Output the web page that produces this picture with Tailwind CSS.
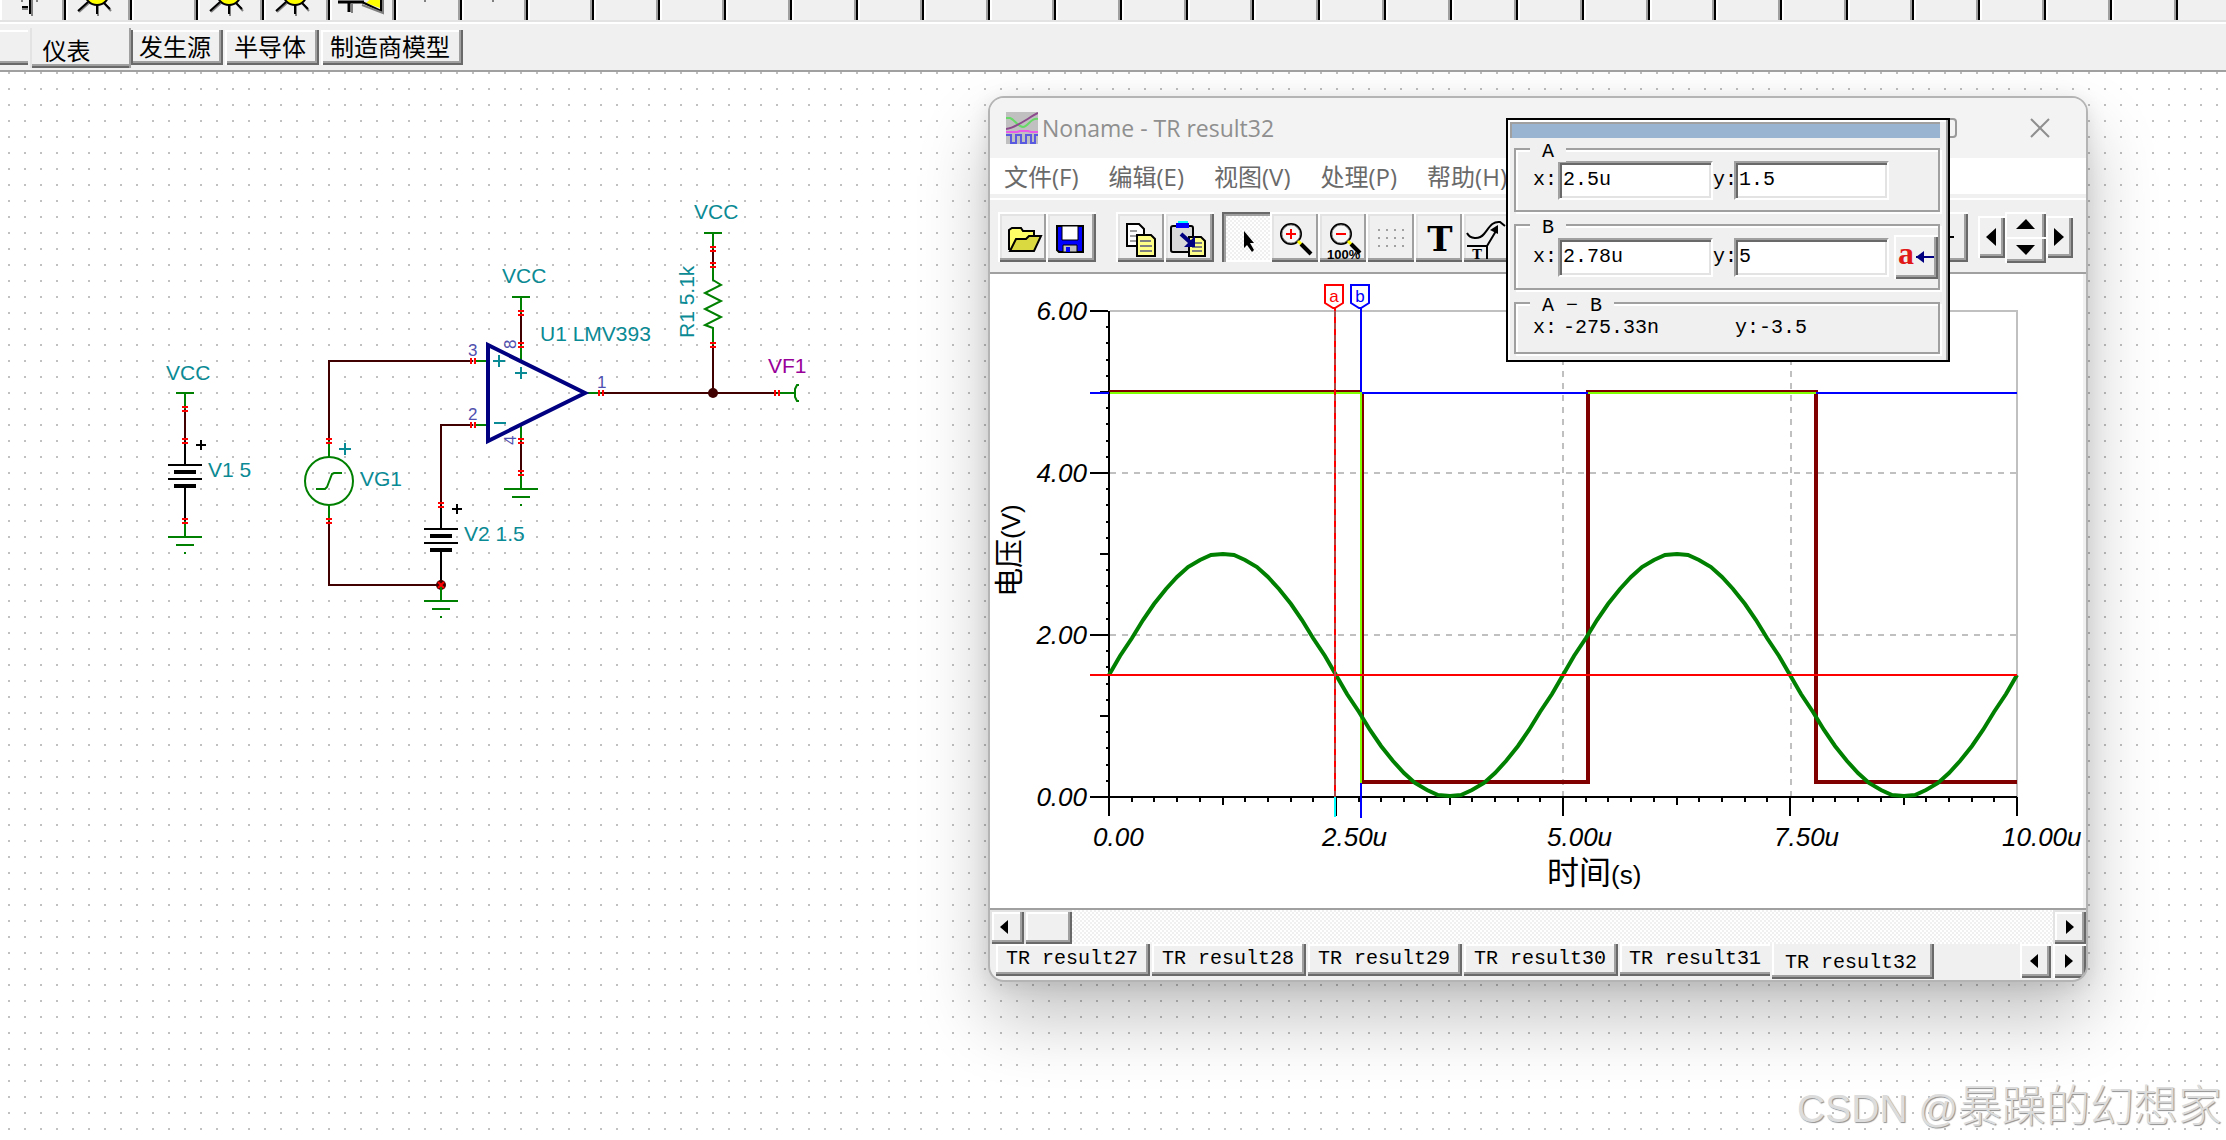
<!DOCTYPE html>
<html lang="zh-CN">

<head>
    <meta charset="UTF-8">
    <meta name="viewport" content="width=device-width, initial-scale=1.0">
    <title>TINA - Noname</title>
    <script src="https://cdn.jsdelivr.net/npm/@tailwindcss/browser@4"></script>
</head>

<body class="h-screen overflow-hidden flex flex-col bg-white text-black font-['Liberation_Sans','Noto_Sans_CJK_SC',sans-serif]">

    <!-- component toolbar -->
    <header class="shrink-0 bg-[#f0f0f0]">
        <div id="parts" class="flex h-5 overflow-hidden">
            <button aria-label="Gate" class="part w-[66px] h-5 shrink-0 shadow-[inset_2px_0_#fff,inset_-2px_0_#000,inset_-4px_0_#a0a0a0]">
                <svg width="66" height="20"><path d="M32 0v16M22 9h6M22 0v2M37 0v2" fill="none" stroke="#808080" stroke-width="2" /><path d="M30 0v14M22 7h6" stroke="#000" stroke-width="2" /></svg>
            </button>
            <button aria-label="Lamp" class="part w-[66px] h-5 shrink-0 shadow-[inset_2px_0_#fff,inset_-2px_0_#000,inset_-4px_0_#a0a0a0]">
                <svg width="66" height="20"><path d="M23 3 13 12M39 4l6 7M32 5v11" stroke="#808080" stroke-width="2" /><path d="M22 2 12 11M38 3l6 6M31 5v9" stroke="#000" stroke-width="2" /><circle cx="31" cy="-7" r="12" fill="#ff0" stroke="#000" stroke-width="2" /></svg>
            </button>
            <button aria-label="Blank" class="part w-[66px] h-5 shrink-0 shadow-[inset_2px_0_#fff,inset_-2px_0_#000,inset_-4px_0_#a0a0a0]"></button>
            <button aria-label="Lamp 2" class="part w-[66px] h-5 shrink-0 shadow-[inset_2px_0_#fff,inset_-2px_0_#000,inset_-4px_0_#a0a0a0]">
                <svg width="66" height="20"><path d="M23 3 13 12M39 4l6 7M32 5v11" stroke="#808080" stroke-width="2" /><path d="M22 2 12 11M38 3l6 6M31 5v9" stroke="#000" stroke-width="2" /><circle cx="31" cy="-7" r="12" fill="#ff0" stroke="#000" stroke-width="2" /></svg>
            </button>
            <button aria-label="Lamp 3" class="part w-[66px] h-5 shrink-0 shadow-[inset_2px_0_#fff,inset_-2px_0_#000,inset_-4px_0_#a0a0a0]">
                <svg width="66" height="20"><path d="M23 3 13 12M39 4l6 7M32 5v11" stroke="#808080" stroke-width="2" /><path d="M22 2 12 11M38 3l6 6M31 5v9" stroke="#000" stroke-width="2" /><circle cx="31" cy="-7" r="12" fill="#ff0" stroke="#000" stroke-width="2" /></svg>
            </button>
            <button aria-label="Buzzer" class="part w-[66px] h-5 shrink-0 shadow-[inset_2px_0_#fff,inset_-2px_0_#000,inset_-4px_0_#a0a0a0]">
                <svg width="66" height="20"><path d="M36 3 50 8V-2H42z" fill="#ff0" /><path d="M8 2h26M19 2v10" stroke="#000" stroke-width="3" /><path d="M32 2 51 11V-2" fill="none" stroke="#000" stroke-width="2" /><path d="M32 5l21 8V0M22 4v9" fill="none" stroke="#808080" stroke-width="2" /></svg>
            </button>
            <button aria-label="Part" class="part w-[66px] h-5 shrink-0 shadow-[inset_2px_0_#fff,inset_-2px_0_#000,inset_-4px_0_#a0a0a0]">
                <svg width="66" height="20"><path d="M29 0v2" stroke="#808080" stroke-width="2" /></svg>
            </button>
            <button aria-label="Part" class="part w-[66px] h-5 shrink-0 shadow-[inset_2px_0_#fff,inset_-2px_0_#000,inset_-4px_0_#a0a0a0]">
                <svg width="66" height="20"><path d="M31 0v2" stroke="#808080" stroke-width="2" /></svg>
            </button>
        </div>
        <div class="h-1 border-t-2 border-[#e3e3e3] bg-white"></div>
        <nav class="flex items-start gap-[2px] h-12 pt-1 border-b-2 border-[#a0a0a0] text-2xl leading-none">
            <button aria-label="开关" class="w-7 h-[35px] mt-[2px] shadow-[inset_0_2px_#fff,inset_0_-2px_#696969,inset_0_-4px_#a0a0a0]"></button>
            <button class="w-[101px] h-10 pr-7 pt-2 shadow-[inset_2px_0_#e3e3e3,inset_-2px_0_#a0a0a0,inset_0_-2px_#696969,inset_0_-4px_#a0a0a0]">仪表</button>
            <button class="w-[92px] h-[35px] mt-[2px] -ml-[2px] pr-1 shadow-[inset_2px_0_#696969,inset_-2px_0_#696969,inset_0_-2px_#696969,inset_-4px_-4px_#a0a0a0,inset_0_2px_#fff]">发生源</button>
            <button class="w-[94px] h-[35px] mt-[2px] pr-1 shadow-[inset_2px_0_#fff,inset_-2px_0_#696969,inset_0_-2px_#696969,inset_-4px_-4px_#a0a0a0,inset_0_2px_#fff]">半导体</button>
            <button class="w-[142px] h-[35px] mt-[2px] pr-1 shadow-[inset_2px_0_#fff,inset_-2px_0_#696969,inset_0_-2px_#696969,inset_-4px_-4px_#a0a0a0,inset_0_2px_#fff]">制造商模型</button>
        </nav>
    </header>

    <main class="relative grow overflow-hidden">

        <!-- schematic sheet, drawn in window coordinates -->
        <svg class="absolute inset-0 w-full h-full" font-family="Liberation Sans" font-size="21" fill="none" stroke-width="2">
            <defs>
                <pattern id="dots" width="16" height="16" patternUnits="userSpaceOnUse">
                    <rect x="8" y="8" width="2" height="2" fill="#c0c0c0" />
                </pattern>
                <g id="gnd">
                    <path d="M0 0v16M-17 16h34M-9 24h18M-1 32h2" stroke="#008000" />
                </g>
                <g id="vcc">
                    <path d="M0 0v16M-9 0h18" stroke="#008000" />
                </g>
                <path id="pinv" d="M-3-2h6M-3 2h6" stroke="#f00" />
                <path id="pinh" d="M-2-3v6M2-3v6" stroke="#f00" />
                <g id="bat" stroke="#000">
                    <path d="M0-24V0M0 21v36M-17 0h34M-17 14h34M11-20h10M16-25v10" />
                    <path d="M-11 7h22M-11 21h22" stroke-width="4" />
                </g>
            </defs>
            <g transform="translate(0 -72)">
                <rect y="72" width="100%" height="100%" fill="url(#dots)" />

                <!-- wires -->
                <g stroke="#400000">
                    <path d="M185 409v32M329 441v-80h144M329 521v64h112M441 505v-80h32M521 313v32M521 441v32M601 393h176M713 249v16M713 345v48" />
                </g>

                <use href="#vcc" x="185" y="393" />
                <use href="#bat" x="185" y="465" />
                <use href="#gnd" x="185" y="521" />

                <circle cx="329" cy="481" r="24" stroke="#008000" />
                <path d="M329 441v16M329 505v16M316 489h9l2-2 5-13 2-1h8" stroke="#008000" />

                <use href="#bat" x="441" y="529" />
                <circle cx="441" cy="585" r="5" fill="#400000" />
                <use href="#gnd" x="441" y="585" />
                <path d="M438 582l6 6M444 582l-6 6" stroke="#f00" />

                <!-- LMV393 -->
                <path d="M475 361h12M475 425h12M521 345v16M521 426v15M585 393h16" stroke="#008000" />
                <path d="M488 345v96l97-48z" stroke="#000080" stroke-width="4" />
                <path d="M493 361h12M499 355v12M515 373h12M521 367v12M494 423h12M339 449h12M345 443v12" stroke="#0a8a94" />
                <use href="#vcc" x="521" y="297" />
                <use href="#gnd" x="521" y="473" />

                <!-- R1 -->
                <use href="#vcc" x="713" y="233" />
                <path d="M713 265v15l8 5-16 8 16 8-16 8 16 8-16 8 8 3v17" stroke="#008000" />
                <circle cx="713" cy="393" r="5" fill="#400000" />
                <path d="M777 393h18M799 385h-2l-2 4v8l2 4h2" stroke="#008000" />

                <use href="#pinv" x="185" y="409" />
                <use href="#pinv" x="185" y="441" />
                <use href="#pinv" x="185" y="521" />
                <use href="#pinv" x="329" y="441" />
                <use href="#pinv" x="329" y="521" />
                <use href="#pinv" x="441" y="505" />
                <use href="#pinv" x="521" y="313" />
                <use href="#pinv" x="521" y="345" />
                <use href="#pinv" x="521" y="441" />
                <use href="#pinv" x="521" y="473" />
                <use href="#pinv" x="713" y="249" />
                <use href="#pinv" x="713" y="265" />
                <use href="#pinv" x="713" y="345" />
                <use href="#pinh" x="473" y="361" />
                <use href="#pinh" x="473" y="425" />
                <use href="#pinh" x="601" y="393" />
                <use href="#pinh" x="777" y="393" />

                <g fill="#0a8a94">
                    <text x="166" y="380">VCC</text>
                    <text x="208" y="477">V1 5</text>
                    <text x="360" y="486">VG1</text>
                    <text x="464" y="541">V2 1.5</text>
                    <text x="502" y="283">VCC</text>
                    <text x="540" y="341">U1 LMV393</text>
                    <text x="694" y="219">VCC</text>
                    <text transform="translate(694 338) rotate(-90)">R1 5.1k</text>
                </g>
                <text x="768" y="373" fill="#990099">VF1</text>
                <g fill="#5050b0" font-size="17">
                    <text x="468" y="356">3</text>
                    <text x="468" y="420">2</text>
                    <text x="597" y="388">1</text>
                    <text transform="translate(516 349) rotate(-90)">8</text>
                    <text transform="translate(516 445) rotate(-90)">4</text>
                </g>
            </g>
        </svg>

        <!-- result window -->
        <section class="absolute left-[988px] top-6 w-[1100px] flex flex-col rounded-2xl border-2 border-[#b4b4b4] bg-[#f0f0f0] overflow-hidden shadow-[0_36px_70px_rgba(0,0,0,0.24),0_4px_20px_rgba(0,0,0,0.1)]">
            <div class="flex items-center h-[60px] pl-4 pr-9 bg-[#f3f3f3] text-[#8f8f8f]">
                <svg width="32" height="32" class="mr-1" fill="none" stroke-width="2">
                    <rect width="32" height="32" fill="#c0c0c0" />
                    <path d="M0 6h4c4 1 8 9 13 9s8-10 15-8" stroke="#66d966" />
                    <path d="M0 17C10 16 22 6 32 1" stroke="#8c4a8c" />
                    <path d="M0 20h11l3-1h8l3 1h7" stroke="#e85ae8" />
                    <path d="M0 23h5v8h5v-8h5v8h5v-8h5v8h4v-8h3" stroke="#5a5ae0" stroke-width="2" />
                </svg>
                <h1 class="text-[23px] font-['Open_Sans'] leading-8">Noname - TR result32</h1>
                <button aria-label="最大化" class="ml-auto mr-[73px]"><svg width="20" height="20" fill="none" stroke="#999" stroke-width="2"><rect x="1" y="1" width="18" height="18" rx="3" /></svg></button>
                <button aria-label="关闭"><svg width="20" height="20" stroke="#8f8f8f" stroke-width="2"><path d="M1 1l18 18M19 1 1 19" /></svg></button>
            </div>
            <nav class="flex gap-[30px] h-9 px-[14px] pt-[2px] items-center bg-white text-[#6a6a6a] text-2xl leading-none font-['Open_Sans','Noto_Sans_CJK_SC',sans-serif]">
                <button>文件(F)</button>
                <button>编辑(E)</button>
                <button>视图(V)</button>
                <button>处理(P)</button>
                <button>帮助(H)</button>
            </nav>
            <div class="mt-1 flex items-start h-[76px] pt-3 pl-2 border-t-2 border-t-white border-b-2 border-b-[#a0a0a0]">
                <button aria-label="打开" class="w-12 h-[50px] shadow-[inset_2px_0_#fff,inset_0_2px_#fff,inset_0_-2px_#696969,inset_-2px_-4px_#a0a0a0,inset_4px_4px_#e3e3e3]">
                    <svg width="48" height="48" stroke="#000" stroke-width="2"><path d="M11 37V17l3-2h9l2 3h11v5h2v4" fill="#ff6" /><path d="M12 38l6-12h10l3-3h12l-7 15z" fill="#dada40" /></svg>
                </button>
                <button aria-label="保存" class="w-[50px] h-[50px] shadow-[inset_2px_0_#fff,inset_0_2px_#fff,inset_0_-2px_#696969,inset_-2px_0_#696969,inset_-4px_-4px_#a0a0a0,inset_4px_4px_#e3e3e3]">
                    <svg width="48" height="48"><path d="M11 13h26v26H13l-2-2z" fill="#00f" stroke="#000" stroke-width="2" /><path d="M16 13h16v14H16z" fill="#fff" stroke="#000" stroke-width="1" /><path d="M17 32h14v7H17z" fill="#c0c0c0" stroke="#000" stroke-width="1" /><path d="M20 34h4v5h-4z" fill="#00f" /></svg>
                </button>
                <button aria-label="复制" class="ml-5 w-12 h-[50px] shadow-[inset_2px_0_#fff,inset_0_2px_#fff,inset_0_-2px_#696969,inset_-2px_-4px_#a0a0a0,inset_4px_4px_#e3e3e3]">
                    <svg width="48" height="48" stroke="#000" stroke-width="2"><path d="M11 11h12l5 5v17H11z" fill="#fff" /><path d="M14 18h7M14 23h6M14 28h6" stroke="#a0a0a0" /><path d="M21 22h14l4 4v17H21z" fill="#ff8" /><path d="M24 28h11M24 33h12M24 38h12" stroke="#808080" /></svg>
                </button>
                <button aria-label="粘贴" class="w-[50px] h-[50px] shadow-[inset_2px_0_#fff,inset_0_2px_#fff,inset_0_-2px_#696969,inset_-2px_0_#696969,inset_-4px_-4px_#a0a0a0,inset_4px_4px_#e3e3e3]">
                    <svg width="48" height="48" stroke="#000" stroke-width="2"><rect x="7" y="13" width="22" height="26" rx="2" fill="#d8d8d8" /><path d="M14 8h10v3H14z" fill="#0ff" stroke="none" /><path d="M12 10h13v5H12z" fill="#00f" stroke="none" /><path d="M25 24h12l4 4v15H25z" fill="#ff8" /><path d="M28 30h10M28 34h10M28 38h10" stroke="#808080" /><path d="M17 21l10 9" stroke="#000080" stroke-width="4" /><path d="M31 23v11H20z" fill="#000080" stroke="none" /></svg>
                </button>
                <div class="ml-2 flex w-[746px]">
                    <button aria-label="选择" class="w-12 h-[50px] bg-[repeating-conic-gradient(#fff_0_25%,#f0f0f0_0_50%)] bg-[length:4px_4px] shadow-[inset_2px_2px_#696969,inset_4px_4px_#a0a0a0,inset_0_-2px_#fff]">
                        <svg width="48" height="48"><path d="M22 18v17l3-3 5 7 2-2-4-7h4z" /></svg>
                    </button>
                    <button aria-label="放大" class="w-12 h-[50px] shadow-[inset_2px_0_#fff,inset_0_2px_#fff,inset_0_-2px_#696969,inset_-2px_-4px_#a0a0a0,inset_4px_4px_#e3e3e3]">
                        <svg width="48" height="48" stroke-width="2"><circle cx="21" cy="21" r="10" fill="#f8f8f8" stroke="#000" /><circle cx="21" cy="21" r="9" fill="none" stroke="#909090" stroke-width="1" /><path d="M16 21h10M21 16v10" stroke="#f00" /><path d="M28 28l4 4" stroke="#ff0" stroke-width="3" /><path d="M31 31l10 10" stroke="#000" stroke-width="4" /></svg>
                    </button>
                    <button aria-label="缩小" class="w-12 h-[50px] shadow-[inset_2px_0_#fff,inset_0_2px_#fff,inset_0_-2px_#696969,inset_-2px_-4px_#a0a0a0,inset_4px_4px_#e3e3e3]">
                        <svg width="48" height="48" stroke-width="2"><circle cx="23" cy="21" r="10" fill="#f8f8f8" stroke="#000" /><circle cx="23" cy="21" r="9" fill="none" stroke="#909090" stroke-width="1" /><path d="M18 21h10" stroke="#f00" /><path d="M30 28l4 4" stroke="#ff0" stroke-width="3" /><path d="M33 31l9 9" stroke="#000" stroke-width="4" /><text x="9" y="46" font-size="13" font-family="Liberation Sans" font-weight="bold">100%</text></svg>
                    </button>
                    <button aria-label="网格" class="w-12 h-[50px] shadow-[inset_2px_0_#fff,inset_0_2px_#fff,inset_0_-2px_#696969,inset_-2px_-4px_#a0a0a0,inset_4px_4px_#e3e3e3]">
                        <svg width="48" height="48" stroke="#a0a0a0" stroke-width="2" stroke-dasharray="2 6"><path d="M12 17h28M12 25h28M12 33h28" /></svg>
                    </button>
                    <button aria-label="文本" class="w-12 h-[50px] shadow-[inset_2px_0_#fff,inset_0_2px_#fff,inset_0_-2px_#696969,inset_-2px_-4px_#a0a0a0,inset_4px_4px_#e3e3e3]">
                        <svg width="48" height="48"><text x="26" y="38" text-anchor="middle" font-family="DejaVu Serif" font-weight="bold" font-size="34">T</text></svg>
                    </button>
                    <button aria-label="标注" class="w-12 h-[50px] shadow-[inset_2px_0_#fff,inset_0_2px_#fff,inset_0_-2px_#696969,inset_-2px_-4px_#a0a0a0,inset_4px_4px_#e3e3e3]">
                        <svg width="48" height="48" fill="none" stroke="#000" stroke-width="2"><path d="M5 20c3 6 12 7 17 1s8-13 16-12l5 4M5 33h20v13M25 33l9-15" /><path d="M36 12v9l-8-4z" fill="#000" stroke="none" /><text x="15" y="46" text-anchor="middle" fill="#000" stroke="none" font-family="DejaVu Serif" font-weight="bold" font-size="13">T</text></svg>
                    </button>
                    <button aria-label="更多" class="grow h-[50px] shadow-[inset_2px_0_#fff,inset_0_2px_#fff,inset_0_-2px_#696969,inset_-2px_0_#696969,inset_-4px_-4px_#a0a0a0]">
                        <svg width="10" height="2" class="ml-auto mr-[14px]"><rect width="10" height="2" /></svg>
                    </button>
                </div>
                <div class="ml-[10px] flex items-center h-[50px]">
                    <button aria-label="左移" class="w-[27px] h-[42px] pl-2 shadow-[inset_2px_2px_#fff,inset_-2px_-2px_#696969,inset_-4px_-4px_#a0a0a0]"><svg width="12" height="20"><path d="M10 1v18L0 10z" /></svg></button>
                    <div class="flex flex-col">
                        <button aria-label="上移" class="w-[41px] h-[25px] pl-[11px] shadow-[inset_2px_2px_#fff,inset_-2px_0_#696969,inset_-4px_0_#a0a0a0]"><svg width="20" height="10"><path d="M0 10h19L10 0z" /></svg></button>
                        <button aria-label="下移" class="w-[41px] h-[26px] pl-[11px] shadow-[inset_2px_2px_#fff,inset_-2px_-2px_#696969,inset_-4px_-4px_#a0a0a0]"><svg width="20" height="10"><path d="M0 0h19L10 10z" /></svg></button>
                    </div>
                    <button aria-label="右移" class="w-[27px] h-[42px] pl-2 shadow-[inset_2px_2px_#fff,inset_-2px_-2px_#696969,inset_-4px_-4px_#a0a0a0]"><svg width="12" height="20"><path d="M0 1v18l10-9z" /></svg></button>
                </div>
            </div>

            <!-- transient chart: 81px per volt, 227px per 2.5us -->
            <svg viewBox="990 274 1096 634" class="block w-full bg-white" fill="none" stroke-width="2" font-family="Liberation Sans, Noto Sans CJK SC" font-size="26">
                <path d="M2085 274v634" stroke="#f0f0f0" stroke-width="4" />
                <path d="M1110 311h907v486" stroke="#c0c0c0" />
                <path d="M1110 473h907M1110 635h907M1335 311v486M1563 311v486M1791 311v486" stroke="#c0c0c0" stroke-dasharray="6 6" />
                <path id="axes" stroke="#000" />
                <path d="M1109 391h253M1363 392v389" stroke="#800000" />
                <path d="M1362 782h226v-390h228v390h201" stroke="#800000" stroke-width="4" />
                <path d="M1090 393h19M1361 393h656M1361 307v86M1361 783v35" stroke="#00f" />
                <path d="M1110 393h251v390M1588 393h228" stroke="#80ff00" />
                <polyline id="sine" stroke="#008000" stroke-width="4" />
                <path d="M1090 675h927" stroke="#f00" />
                <path d="M1335 307v490" stroke="#f00" />
                <path d="M1335 311v486" stroke="#b04848" stroke-dasharray="6 6" />
                <path d="M1335 797v20" stroke="#0ff" />
                <path d="M1325 285h18v18l-8 5h-2l-8-5z" fill="#fff" stroke="#f00" />
                <path d="M1351 285h18v18l-8 5h-2l-8-5z" fill="#fff" stroke="#00f" />
                <g font-size="17" text-anchor="middle">
                    <text x="1334" y="302" fill="#f00">a</text>
                    <text x="1360" y="302" fill="#00f">b</text>
                </g>
                <g fill="#000" font-style="italic">
                    <g text-anchor="end">
                        <text x="1087" y="320">6.00</text>
                        <text x="1087" y="482">4.00</text>
                        <text x="1087" y="644">2.00</text>
                        <text x="1087" y="806">0.00</text>
                    </g>
                    <text x="1093" y="846">0.00</text>
                    <text x="1322" y="846">2.50u</text>
                    <text x="1547" y="846">5.00u</text>
                    <text x="1774" y="846">7.50u</text>
                    <text x="2002" y="846">10.00u</text>
                </g>
                <g fill="#000">
                    <text x="1547" y="884"><tspan font-size="32">时间</tspan>(s)</text>
                    <text transform="translate(1020 597) rotate(-90)"><tspan font-size="29">电压</tspan>(V)</text>
                </g>
            </svg>

            <div class="flex h-9 border-t-2 border-[#a0a0a0] bg-[repeating-conic-gradient(#fff_0_25%,#f0f0f0_0_50%)] bg-[length:4px_4px]">
                <button aria-label="向左滚动" class="w-[34px] pl-[10px] bg-[#f0f0f0] shadow-[inset_2px_2px_#e3e3e3,inset_-2px_-2px_#696969,inset_-4px_-4px_#a0a0a0,inset_4px_4px_#fff]"><svg width="9" height="14"><path d="M8 0v14L0 7z" /></svg></button>
                <div class="w-12 bg-[#f0f0f0] shadow-[inset_2px_2px_#e3e3e3,inset_-2px_-2px_#696969,inset_-4px_-4px_#a0a0a0,inset_4px_4px_#fff]"></div>
                <button aria-label="向右滚动" class="ml-auto w-[33px] pl-[13px] bg-[#f0f0f0] shadow-[inset_2px_2px_#e3e3e3,inset_-2px_-2px_#696969,inset_-4px_-4px_#a0a0a0,inset_4px_4px_#fff]"><svg width="9" height="14"><path d="M0 0v14l8-7z" /></svg></button>
            </div>
            <nav class="flex items-start gap-[2px] h-9 pl-[6px] text-xl leading-none font-['Liberation_Mono',monospace]">
                <button class="w-[154px] h-8 pr-[2px] pb-[2px] shadow-[inset_-2px_0_#696969,inset_0_-2px_#696969,inset_-4px_-4px_#a0a0a0,inset_2px_2px_#fff]">TR result27</button>
                <button class="w-[154px] h-8 pr-[2px] pb-[2px] shadow-[inset_-2px_0_#696969,inset_0_-2px_#696969,inset_-4px_-4px_#a0a0a0,inset_2px_2px_#fff]">TR result28</button>
                <button class="w-[154px] h-8 pr-[2px] pb-[2px] shadow-[inset_-2px_0_#696969,inset_0_-2px_#696969,inset_-4px_-4px_#a0a0a0,inset_2px_2px_#fff]">TR result29</button>
                <button class="w-[154px] h-8 pr-[2px] pb-[2px] shadow-[inset_-2px_0_#696969,inset_0_-2px_#696969,inset_-4px_-4px_#a0a0a0,inset_2px_2px_#fff]">TR result30</button>
                <button class="w-[150px] h-8 pb-[2px] shadow-[inset_0_-2px_#696969,inset_0_-4px_#a0a0a0,inset_2px_2px_#fff]">TR result31</button>
                <button class="w-[162px] h-[35px] pt-[2px] pr-1 shadow-[inset_-2px_0_#696969,inset_0_-2px_#696969,inset_-4px_-4px_#a0a0a0,inset_2px_0_#fff]">TR result32</button>
                <button aria-label="上一页" class="ml-auto w-[31px] h-[34px] pl-[10px] shadow-[inset_2px_2px_#fff,inset_-2px_-2px_#696969,inset_-4px_-4px_#a0a0a0]"><svg width="9" height="14"><path d="M8 0v14L0 7z" /></svg></button>
                <button aria-label="下一页" class="w-[33px] h-[34px] pl-3 shadow-[inset_2px_2px_#fff,inset_-2px_-2px_#696969,inset_-4px_-4px_#a0a0a0]"><svg width="9" height="14"><path d="M0 0v14l8-7z" /></svg></button>
            </nav>
        </section>

        <!-- cursor readout -->
        <section class="absolute left-[1506px] top-[46px] w-[444px] p-[2px] pb-[6px] pl-[6px] pr-2 border-2 border-black bg-[#f0f0f0] shadow-[inset_-2px_0_#a0a0a0,inset_2px_2px_#fff] text-xl leading-none font-['Liberation_Mono',monospace]">
            <div class="-ml-[4px] h-4 border-t-2 border-l-2 border-[#a0a0a0] bg-[#99b4d1]"></div>
            <fieldset class="relative mt-[10px] h-[64px] flex items-center pl-[17px] border-2 border-[#a0a0a0] shadow-[2px_2px_#fff,inset_2px_2px_#fff]">
                <legend class="absolute left-[14px] -top-2 px-3 bg-[#f0f0f0]">A</legend>
                <label for="ax" class="w-[25px]">x:</label>
                <input id="ax" value="2.5u" class="w-[155px] h-[39px] px-[3px] pb-[2px] bg-white border-2 border-t-[#a0a0a0] border-l-[#a0a0a0] border-r-white border-b-white shadow-[inset_2px_2px_#696969,inset_-2px_-2px_#e3e3e3] outline-none">
                <label for="ay" class="w-[21px]">y:</label>
                <input id="ay" value="1.5" class="w-[155px] h-[39px] px-[3px] pb-[2px] bg-white border-2 border-t-[#a0a0a0] border-l-[#a0a0a0] border-r-white border-b-white shadow-[inset_2px_2px_#696969,inset_-2px_-2px_#e3e3e3] outline-none">
            </fieldset>
            <fieldset class="relative mt-3 h-[66px] flex items-center pl-[17px] border-2 border-[#a0a0a0] shadow-[2px_2px_#fff,inset_2px_2px_#fff]">
                <legend class="absolute left-[14px] -top-2 px-3 bg-[#f0f0f0]">B</legend>
                <label for="bx" class="w-[25px]">x:</label>
                <input id="bx" value="2.78u" class="w-[155px] h-[39px] px-[3px] pb-[2px] bg-white border-2 border-t-[#a0a0a0] border-l-[#a0a0a0] border-r-white border-b-white shadow-[inset_2px_2px_#696969,inset_-2px_-2px_#e3e3e3] outline-none">
                <label for="by" class="w-[21px]">y:</label>
                <input id="by" value="5" class="w-[155px] h-[39px] px-[3px] pb-[2px] bg-white border-2 border-t-[#a0a0a0] border-l-[#a0a0a0] border-r-white border-b-white shadow-[inset_2px_2px_#696969,inset_-2px_-2px_#e3e3e3] outline-none">
                <button class="ml-auto w-11 h-11 flex items-center pl-1 bg-[#f0f0f0] shadow-[inset_2px_2px_#fff,inset_-2px_-2px_#696969,inset_-4px_-4px_#a0a0a0] text-[32px] leading-none font-bold font-['Liberation_Serif'] text-[#e01818]"><span class="-mt-2">a</span><svg width="18" height="14" class="ml-[2px]"><path d="M0 7h18" stroke="#000080" stroke-width="2" /><path d="M0 7l8-6v12z" fill="#000080" /></svg></button>
            </fieldset>
            <fieldset class="relative mt-3 h-[52px] flex items-center pl-[17px] border-2 border-[#a0a0a0] shadow-[2px_2px_#fff,inset_2px_2px_#fff]">
                <legend class="absolute left-[14px] -top-2 px-3 bg-[#f0f0f0]">A − B</legend>
                <span class="w-[30px]">x:</span>
                <output class="w-[172px]">-275.33n</output>
                <output>y:-3.5</output>
            </fieldset>
        </section>

        <p class="absolute right-1 bottom-3 text-[44px] leading-none font-light text-[#dcdcdc] [text-shadow:1px_1px_1px_#909090] whitespace-nowrap font-['Noto_Sans_CJK_SC',sans-serif]"><span class="text-[39px] font-['Liberation_Sans']">CSDN @</span>暴躁的幻想家</p>
    </main>

    <script>
        // fill the rest of the component toolbar with empty slots
        const parts = document.getElementById("parts");
        const blank = parts.children[2];
        while (parts.children.length < 33) {
            parts.appendChild(blank.cloneNode(true));
        }

        // ticks
        let d = "M1109 311v505M1108 797h909";
        for (let i = 0; i <= 30; i++) {
            const len = i % 10 === 0 ? 18 : i % 5 === 0 ? 8 : 2;
            d += `M1108 ${Math.round(797 - i * 16.2)}h-${len}`;
        }
        for (let i = 0; i <= 40; i++) {
            const len = i % 10 === 0 ? 19 : i % 5 === 0 ? 8 : 5;
            d += `M${Math.round(1109 + i * 22.7)} 797v${len}`;
        }
        document.getElementById("axes").setAttribute("d", d);

        // VG1: 1.5V offset, 1.5V amplitude, 5us period
        const pts = [];
        for (let i = 0; i <= 80; i++) {
            const v = 1.5 + 1.5 * Math.sin(i * Math.PI / 20);
            pts.push(Math.round(1109 + i * 11.35) + "," + Math.round(796 - v * 80.7));
        }
        document.getElementById("sine").setAttribute("points", pts.join(" "));
    </script>
</body>

</html>
